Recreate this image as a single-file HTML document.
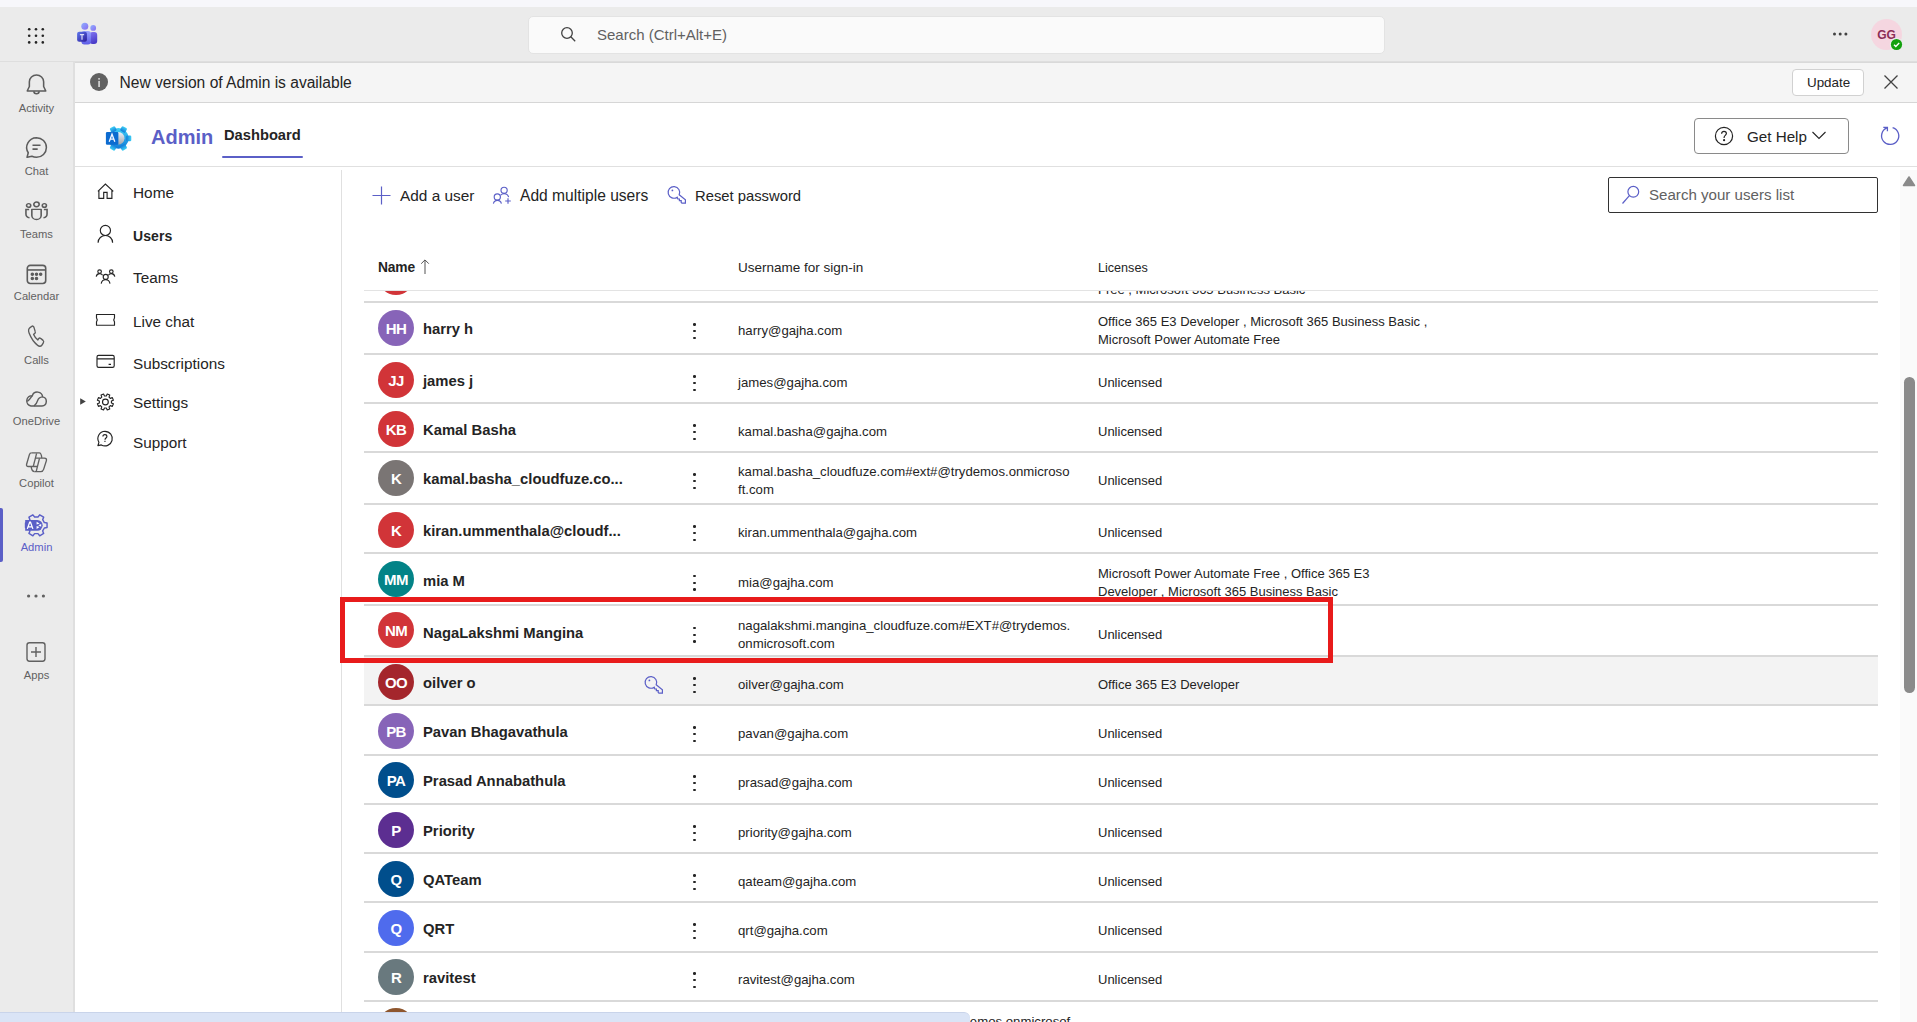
<!DOCTYPE html>
<html><head><meta charset="utf-8">
<style>
html,body{margin:0;padding:0}
body{width:1917px;height:1022px;overflow:hidden;position:relative;font-family:"Liberation Sans",sans-serif;color:#242424;background:#fff}
.a{position:absolute}
.t{position:absolute;white-space:nowrap}
.rl{position:absolute;left:364px;width:1514px;height:2px;background:#d9d9d9}
.av{position:absolute;left:378px;width:36px;height:36px;border-radius:50%;color:#fff;font-weight:700;font-size:15px;line-height:37px;text-align:center;letter-spacing:-0.6px}
.keb{position:absolute;left:693px;width:4px;height:16px}
.keb i{display:block;width:2.6px;height:2.6px;border-radius:50%;background:#242424;margin:0 0 4.2px 0}
.rail{position:absolute;left:0;width:74px;text-align:center;font-size:11px;color:#616161}
.rail svg{display:block;margin:0 auto}
.nav{position:absolute;left:133px;font-size:15px;color:#242424;white-space:nowrap}
.ni{position:absolute;left:95px}
</style></head><body>
<!-- top strip -->
<div class="a" style="left:0;top:0;width:1917px;height:7px;background:#f7f7fb"></div>
<!-- header -->
<div class="a" style="left:0;top:7px;width:1917px;height:54px;background:#ebebeb;border-bottom:1px solid #dedede"></div>
<!-- waffle -->
<svg class="a" style="left:26px;top:26px" width="20" height="20" viewBox="0 0 20 20" fill="#242424">
<circle cx="3.2" cy="3.2" r="1.3"/><circle cx="10" cy="3.2" r="1.3"/><circle cx="16.8" cy="3.2" r="1.3"/>
<circle cx="3.2" cy="9.8" r="1.3"/><circle cx="10" cy="9.8" r="1.3"/><circle cx="16.8" cy="9.8" r="1.3"/>
<circle cx="3.2" cy="16.4" r="1.3"/><circle cx="10" cy="16.4" r="1.3"/><circle cx="16.8" cy="16.4" r="1.3"/>
</svg>
<!-- teams logo -->
<svg class="a" style="left:72px;top:18px" width="30" height="30" viewBox="0 0 30 30">
<defs>
<linearGradient id="tgb" x1="0" y1="0" x2="0.3" y2="1"><stop offset="0" stop-color="#8377f2"/><stop offset="1" stop-color="#4a3cc8"/></linearGradient>
<linearGradient id="tgf" x1="0" y1="0" x2="0" y2="1"><stop offset="0" stop-color="#9aa4ff"/><stop offset="1" stop-color="#5b5ae6"/></linearGradient>
<linearGradient id="tgh" x1="0" y1="0" x2="1" y2="1"><stop offset="0" stop-color="#8fb0ff"/><stop offset="1" stop-color="#8a6cf0"/></linearGradient>
<linearGradient id="tgs" x1="0" y1="0" x2="1" y2="1"><stop offset="0" stop-color="#5f78ee"/><stop offset="1" stop-color="#2a1a98"/></linearGradient>
</defs>
<rect x="17.6" y="14" width="7.6" height="12" rx="3" fill="url(#tgb)"/>
<circle cx="21.2" cy="9.9" r="2.9" fill="url(#tgh)"/>
<circle cx="12.8" cy="8.2" r="3.5" fill="url(#tgh)"/>
<rect x="9.4" y="13" width="9.6" height="13.6" rx="3" fill="url(#tgf)"/>
<rect x="5.1" y="13.8" width="9.8" height="10" rx="2" fill="url(#tgs)"/>
<path d="M7.9 16h4.2v1.3h-1.5v4.5H9.4v-4.5H7.9z" fill="#dcdcf7"/>
</svg>
<!-- search -->
<div class="a" style="left:528px;top:16px;width:855px;height:36px;background:#fafafa;border:1px solid #e3e3e3;border-radius:5px"></div>
<svg class="a" style="left:559px;top:25px" width="18" height="18" viewBox="0 0 18 18" fill="none" stroke="#424242" stroke-width="1.3">
<circle cx="8" cy="8" r="5.3"/><path d="M11.8 11.8l4.4 4.4"/></svg>
<div class="t" style="left:597px;top:26px;font-size:15px;line-height:18px;color:#616161">Search (Ctrl+Alt+E)</div>
<!-- ellipsis -->
<svg class="a" style="left:1830px;top:30px" width="20" height="8" viewBox="0 0 20 8" fill="#424242">
<circle cx="4.5" cy="4" r="1.5"/><circle cx="10.2" cy="4" r="1.5"/><circle cx="15.9" cy="4" r="1.5"/></svg>
<!-- avatar -->
<div class="a" style="left:1871px;top:19px;width:31px;height:31px;border-radius:50%;background:#f5d6e0;color:#8b2e56;font-weight:700;font-size:12px;line-height:33px;text-align:center">GG</div>
<svg class="a" style="left:1889px;top:37px" width="15" height="15" viewBox="0 0 15 15">
<circle cx="7.5" cy="7.5" r="6.7" fill="#ebebeb"/><circle cx="7.5" cy="7.5" r="5.6" fill="#13a10e"/>
<path d="M5 7.7l1.8 1.7 3.4-3.4" stroke="#fff" stroke-width="1.4" fill="none"/></svg>

<!-- rail -->
<div class="a" style="left:0;top:62px;width:73px;height:960px;background:#ebebeb;border-right:2px solid #dfdfdf"></div>
<div class="a" style="left:0;top:508px;width:3px;height:54px;background:#5b5fc7;border-radius:0 2px 2px 0"></div>
<svg class="a" style="left:22.5px;top:70.5px" width="27" height="27" viewBox="0 0 22 22" fill="none" stroke="#5c5c5c" stroke-width="1.3"><g transform="translate(11 10) scale(0.97 0.92) translate(-11 -10)"><path d="M11 2.6a6 6 0 0 0-6 6v4.3L3.2 16.8h15.6L17 12.9V8.6a6 6 0 0 0-6-6z" stroke-linejoin="round"/><path d="M8.8 17a2.2 2.2 0 0 0 4.4 0"/></g></svg>
<div class="t" style="left:0px;top:100.72px;font-size:11.2px;line-height:14px;font-weight:400;color:#616161;letter-spacing:0px;width:73px;text-align:center;">Activity</div>
<svg class="a" style="left:22.5px;top:134.1px" width="27" height="27" viewBox="0 0 22 22" fill="none" stroke="#5c5c5c" stroke-width="1.3"><g transform="translate(11 11) scale(0.96 0.95) translate(-11 -11)"><path d="M11 2.6a8.4 8.4 0 0 1 0 16.8c-1.4 0-2.7-.3-3.9-.9L3 19.4l1-3.9A8.4 8.4 0 0 1 11 2.6z" stroke-linejoin="round"/><path d="M7.6 9h6.8M7.6 12.4h4.4"/></g></svg>
<div class="t" style="left:0px;top:164.12px;font-size:11.2px;line-height:14px;font-weight:400;color:#616161;letter-spacing:0px;width:73px;text-align:center;">Chat</div>
<svg class="a" style="left:22.5px;top:198.5px" width="27" height="27" viewBox="0 0 22 22" fill="none" stroke="#5c5c5c" stroke-width="1.3"><g transform="translate(11 10) scale(1 0.88) translate(-11 -10)"><circle cx="11" cy="3.6" r="2.2"/><circle cx="4.6" cy="4.6" r="1.7"/><circle cx="17.4" cy="4.6" r="1.7"/><path d="M7.2 8.2h7.6v5.6a3.8 3.8 0 0 1-7.6 0z" stroke-linejoin="round"/><path d="M5 8.4H2.4v4.2c0 1.7 1.2 3.2 2.9 3.4M17 8.4h2.6v4.2c0 1.7-1.2 3.2-2.9 3.4"/></g></svg>
<div class="t" style="left:0px;top:226.52px;font-size:11.2px;line-height:14px;font-weight:400;color:#616161;letter-spacing:0px;width:73px;text-align:center;">Teams</div>
<svg class="a" style="left:22.5px;top:261.3px" width="27" height="27" viewBox="0 0 22 22" fill="none" stroke="#5c5c5c" stroke-width="1.3"><rect x="3.5" y="3.6" width="15" height="14.7" rx="2.4"/><path d="M3.5 7.3h15"/><circle cx="7.6" cy="10.8" r=".8" fill="#5c5c5c"/><circle cx="11" cy="10.8" r=".8" fill="#5c5c5c"/><circle cx="14.4" cy="10.8" r=".8" fill="#5c5c5c"/><circle cx="7.6" cy="14.2" r=".8" fill="#5c5c5c"/><circle cx="11" cy="14.2" r=".8" fill="#5c5c5c"/></svg>
<div class="t" style="left:0px;top:289.12px;font-size:11.2px;line-height:14px;font-weight:400;color:#616161;letter-spacing:0px;width:73px;text-align:center;">Calendar</div>
<svg class="a" style="left:22.5px;top:323.2px" width="27" height="27" viewBox="0 0 22 22" fill="none" stroke="#5c5c5c" stroke-width="1.3"><g transform="translate(11 10.6) scale(0.8 0.96) translate(-11 -10.6)"><path d="M6.2 2.4L4.4 3.5C3 4.4 2.6 6.3 3.5 8.2c2 4.3 5 7.9 8.7 10.4 1.6 1.1 3.6.8 4.6-.6l1.2-1.7c.5-.7.3-1.6-.4-2.1l-2.4-1.6c-.7-.5-1.6-.3-2.1.3l-.8 1c-1.8-1.1-3.3-2.8-4.3-4.7l1-.6c.7-.4 1-1.3.6-2L8.3 3c-.4-.8-1.4-1-2.1-.6z" stroke-linejoin="round"/></g></svg>
<div class="t" style="left:0px;top:352.92px;font-size:11.2px;line-height:14px;font-weight:400;color:#616161;letter-spacing:0px;width:73px;text-align:center;">Calls</div>
<svg class="a" style="left:20px;top:385px" width="32" height="30" viewBox="20 385 32 30" fill="none" stroke="#5c5c5c" stroke-width="1.45"><path d="M31 406H42A4.6 4.6 0 0 0 42.6 396.9A5.3 5.3 0 0 0 32.3 395.7A5.2 5.2 0 0 0 31 406Z" stroke-linejoin="round"/><path d="M34 406Q36.6 404 37.6 400.6Q38.6 397.3 42.6 396.9M27.3 401.3Q29.5 400 32.3 395.7"/></svg>
<div class="t" style="left:0px;top:413.62px;font-size:11.2px;line-height:14px;font-weight:400;color:#616161;letter-spacing:0px;width:73px;text-align:center;">OneDrive</div>
<svg class="a" style="left:20px;top:445px" width="32" height="32" viewBox="0 0 32 32" fill="none" stroke="#616161" stroke-width="1.35"><path d="M11.6 7.8H19.2Q21.3 7.8 21.8 12.9"/><path d="M11.6 7.8Q9.9 7.8 9.4 9.6L6.6 19.2Q6.1 21.5 8.3 21.5H17.2"/><path d="M16.6 8.4L13.3 21.3"/><path d="M19.5 13.3L16.2 26.3"/><path d="M15.9 13.1H24.4Q26.9 13.1 26.4 15.6L23.6 24.4Q22.9 26.6 20.8 26.6H14.6"/><path d="M11.2 21.6Q11.7 26.6 14.6 26.6"/></svg>
<div class="t" style="left:0px;top:476.32px;font-size:11.2px;line-height:14px;font-weight:400;color:#616161;letter-spacing:0px;width:73px;text-align:center;">Copilot</div>
<svg class="a" style="left:20px;top:508px" width="32" height="32" viewBox="20 508 32 32"><path d="M44.36 522.59 L47.06 523.01 L47.06 527.59 L44.36 528.01 L42.68 530.92 L43.66 533.47 L39.70 535.76 L37.98 533.63 L34.62 533.63 L32.90 535.76 L28.94 533.47 L29.92 530.92 L28.24 528.01 L25.54 527.59 L25.54 523.01 L28.24 522.59 L29.92 519.68 L28.94 517.13 L32.90 514.84 L34.62 516.97 L37.98 516.97 L39.70 514.84 L43.66 517.13 L42.68 519.68Z" fill="none" stroke="#5b5fc7" stroke-width="1.45" stroke-linejoin="round"/><path d="M25.2 520H37.3A5.35 5.35 0 0 1 37.3 530.7H25.2Z" fill="#5b5fc7"/><path d="M27.3 528.9L29.7 522.2H30.5L32.9 528.9M28.3 526.9H31.9" stroke="#fff" stroke-width="1.25" fill="none"/><path d="M36.6 521.7L39.6 523.6L36.6 524.6Z M38.2 525.35L41.2 523.9L41.2 526.8Z M36.6 526.1L39.6 527.1L36.6 529Z" fill="#fff"/></svg>
<div class="t" style="left:0px;top:540.12px;font-size:11.2px;line-height:14px;font-weight:400;color:#5b5fc7;letter-spacing:0px;width:73px;text-align:center;">Admin</div>
<svg class="a" style="left:26px;top:592px" width="20" height="8" viewBox="0 0 20 8" fill="#616161"><circle cx="2.6" cy="4" r="1.6"/><circle cx="10" cy="4" r="1.6"/><circle cx="17.4" cy="4" r="1.6"/></svg>
<svg class="a" style="left:25px;top:640.5px" width="22" height="22" viewBox="0 0 22 22" fill="none" stroke="#616161" stroke-width="1.4"><rect x="2" y="1.8" width="18" height="18.4" rx="2.4"/><path d="M11 6v10M6 11h10"/></svg>
<div class="t" style="left:0px;top:667.72px;font-size:11.2px;line-height:14px;font-weight:400;color:#616161;letter-spacing:0px;width:73px;text-align:center;">Apps</div>

<!-- banner -->
<div class="a" style="left:75px;top:62px;width:1842px;height:39px;background:#f5f5f5;border-top:1px solid #d9d9d9;border-bottom:1px solid #d6d6d6"></div>
<svg class="a" style="left:89px;top:72px" width="20" height="20" viewBox="0 0 20 20">
<circle cx="10" cy="10" r="9" fill="#616161"/><rect x="9.35" y="8.9" width="1.45" height="6.1" fill="#e6e6e6"/><circle cx="10.05" cy="6.8" r="0.85" fill="#eeeeee"/></svg>
<div class="t" style="left:119.5px;top:74px;font-size:15.6px;line-height:18px">New version of Admin is available</div>
<div class="a" style="left:1792px;top:69px;width:70px;height:25px;background:#fff;border:1px solid #d1d1d1;border-radius:4px"></div>
<div class="t" style="left:1807px;top:75px;font-size:13.4px;line-height:16px">Update</div>
<svg class="a" style="left:1883px;top:74px" width="16" height="16" viewBox="0 0 16 16" stroke="#424242" stroke-width="1.3"><path d="M1.5 1.5l13 13M14.5 1.5l-13 13"/></svg>

<!-- app header -->
<div class="a" style="left:75px;top:103px;width:1842px;height:63px;background:#fff;border-bottom:1px solid #e0e0e0"></div>
<svg class="a" style="left:100px;top:118px" width="40" height="40" viewBox="0 0 40 40">
<defs>
<linearGradient id="ag" x1="0" y1="0" x2="0" y2="1"><stop offset="0" stop-color="#3fd0f6"/><stop offset="1" stop-color="#127ad8"/></linearGradient>
<linearGradient id="agr" x1="0" y1="0" x2="0" y2="1"><stop offset="0" stop-color="#eef2fa"/><stop offset="1" stop-color="#a0a5ae"/></linearGradient>
</defs>
<g transform="translate(18.4 20.4)" fill="url(#ag)"><circle r="10.3"/><rect x="-2.9" y="-12.9" width="5.8" height="5" rx="1.2" transform="rotate(-30)"/><rect x="-2.9" y="-12.9" width="5.8" height="5" rx="1.2" transform="rotate(30)"/><rect x="-2.9" y="-12.9" width="5.8" height="5" rx="1.2" transform="rotate(90)"/><rect x="-2.9" y="-12.9" width="5.8" height="5" rx="1.2" transform="rotate(150)"/><rect x="-2.9" y="-12.9" width="5.8" height="5" rx="1.2" transform="rotate(210)"/></g>
<path d="M18.2 14A6.3 6.3 0 0 1 18.2 26.6Z" fill="url(#agr)"/>
<rect x="5.9" y="14.1" width="12.4" height="12.7" rx="1.3" fill="#0c6bd0"/>
<path d="M9.2 23.7L12 16.2L14.8 23.7M10.2 21.2H13.8" stroke="#f4f6ff" stroke-width="1.3" fill="none"/>
</svg>
<div class="t" style="left:151px;top:125px;font-size:20px;line-height:24px;font-weight:700;color:#5b5fc7">Admin</div>
<div class="t" style="left:224px;top:126px;font-size:14.7px;line-height:18px;font-weight:700">Dashboard</div>
<div class="a" style="left:222px;top:156px;width:81px;height:2px;background:#5b5fc7;border-radius:1px"></div>
<div class="a" style="left:1694px;top:118px;width:153px;height:34px;background:#fff;border:1px solid #8a8a8a;border-radius:4px"></div>
<svg class="a" style="left:1714px;top:126px" width="20" height="20" viewBox="0 0 20 20" fill="none" stroke="#242424" stroke-width="1.2">
<circle cx="10" cy="10" r="8.6"/><path d="M7.6 7.8c0-1.5 1.1-2.5 2.4-2.5s2.4 0.9 2.4 2.3c0 1.7-2.3 1.9-2.3 3.8v0.5"/><circle cx="10.1" cy="14.2" r="0.5" fill="#242424"/></svg>
<div class="t" style="left:1747px;top:128px;font-size:15.2px;line-height:18px">Get Help</div>
<svg class="a" style="left:1811px;top:130px" width="16" height="10" viewBox="0 0 16 10" fill="none" stroke="#242424" stroke-width="1.1"><path d="M1.5 2l6.5 6.5L14.5 2"/></svg>
<svg class="a" style="left:1876px;top:122px" width="28" height="28" viewBox="1876 122 28 28" fill="none" stroke="#5b5fc7" stroke-width="1.3"><path d="M1892.6 127.6A8.6 8.6 0 1 1 1886.9 127.9"/><path d="M1883.3 127.4H1887.4V131.3"/></svg>

<!-- nav -->
<div class="a" style="left:341px;top:170px;width:1px;height:852px;background:#e0e0e0"></div>
<svg class="a" style="left:90px;top:178px" width="30" height="30" viewBox="0 0 30 30" fill="none" stroke="#242424" stroke-width="1.15"><path d="M7.9 13.4L15.4 6L23.3 13.4M8.9 12.5V20.4H13.7V14.4H17.1V20.4H21.9V12.5" stroke-linejoin="miter"/></svg>
<div class="t" style="left:133px;top:183.16px;font-size:15.4px;line-height:19px;font-weight:400;color:#242424;letter-spacing:0px;">Home</div>
<svg class="a" style="left:90px;top:220px" width="30" height="30" viewBox="0 0 30 30" fill="none" stroke="#242424" stroke-width="1.15"><circle cx="15.4" cy="10.4" r="5.1"/><path d="M8.1 22.7C8.1 18.5 11.5 15.5 15.4 15.5S22.6 18.5 22.6 22.7"/></svg>
<div class="t" style="left:133px;top:227.15px;font-size:14px;line-height:18px;font-weight:700;color:#242424;letter-spacing:0.1px;">Users</div>
<svg class="a" style="left:90px;top:260px" width="30" height="30" viewBox="0 0 30 30" fill="none" stroke="#242424" stroke-width="1.15"><circle cx="9.6" cy="11.6" r="1.8"/><circle cx="21.3" cy="11.6" r="1.8"/><circle cx="15.7" cy="16.9" r="2.5"/><path d="M11.2 23.6Q11.8 19.7 15.6 19.7Q19.4 19.7 20 23.6M6.2 16.6Q6.8 13.6 9.6 13.6Q11.6 13.6 12.6 15.2M24.8 16.6Q24.2 13.6 21.4 13.6Q19.4 13.6 18.4 15.2"/></svg>
<div class="t" style="left:133px;top:268.00px;font-size:15.3px;line-height:19px;font-weight:400;color:#242424;letter-spacing:0px;">Teams</div>
<svg class="a" style="left:90px;top:305px" width="30" height="30" viewBox="0 0 30 30" fill="none" stroke="#242424" stroke-width="1.15"><path d="M6.5 9.5H24.5V12.8Q23 14.8 24.5 16.8V20.2H6.5V16.8Q8 14.8 6.5 12.8Z" stroke-linejoin="round"/></svg>
<div class="t" style="left:133px;top:311.60px;font-size:15.3px;line-height:19px;font-weight:400;color:#242424;letter-spacing:0px;">Live chat</div>
<svg class="a" style="left:90px;top:350px" width="30" height="30" viewBox="0 0 30 30" fill="none" stroke="#242424" stroke-width="1.15"><rect x="7" y="5.4" width="17.2" height="11.9" rx="1.6"/><path d="M7 8.9H24.2M18.6 14.4H21"/></svg>
<div class="t" style="left:133px;top:354.20px;font-size:15.3px;line-height:19px;font-weight:400;color:#242424;letter-spacing:0px;">Subscriptions</div>
<svg class="a" style="left:90px;top:390px" width="30" height="30" viewBox="0 0 30 30" fill="none" stroke="#242424" stroke-width="1.15"><path d="M21.43 12.91 L23.39 13.85 L22.36 16.34 L20.31 15.62 L19.02 16.91 L19.74 18.96 L17.25 19.99 L16.31 18.03 L14.49 18.03 L13.55 19.99 L11.06 18.96 L11.78 16.91 L10.49 15.62 L8.44 16.34 L7.41 13.85 L9.37 12.91 L9.37 11.09 L7.41 10.15 L8.44 7.66 L10.49 8.38 L11.78 7.09 L11.06 5.04 L13.55 4.01 L14.49 5.97 L16.31 5.97 L17.25 4.01 L19.74 5.04 L19.02 7.09 L20.31 8.38 L22.36 7.66 L23.39 10.15 L21.43 11.09Z" stroke-linejoin="round"/><circle cx="15.4" cy="12" r="2.9"/></svg>
<div class="t" style="left:133px;top:392.60px;font-size:15.3px;line-height:19px;font-weight:400;color:#242424;letter-spacing:0px;">Settings</div>
<svg class="a" style="left:90px;top:428px" width="30" height="30" viewBox="0 0 30 30" fill="none" stroke="#242424" stroke-width="1.15"><path d="M15 3.3A7.3 7.3 0 1 1 11.3 16.9L7.9 17.6L8.9 14.3A7.3 7.3 0 0 1 15 3.3Z" stroke-linejoin="round"/><path d="M12.9 8.6C12.9 7.4 13.8 6.6 14.9 6.6S16.9 7.4 16.9 8.5C16.9 10 15 10.1 15 11.7"/><path d="M14.4 13.4H15.5"/></svg>
<div class="t" style="left:133px;top:433.20px;font-size:15.3px;line-height:19px;font-weight:400;color:#242424;letter-spacing:0px;">Support</div>
<svg class="a" style="left:79px;top:397px" width="8" height="9" viewBox="0 0 8 9"><path d="M1.2 1.2L6.8 4.5L1.2 7.8z" fill="#424242"/></svg>

<!-- toolbar -->
<svg class="a" style="left:371px;top:185px" width="21" height="21" viewBox="0 0 21 21" stroke="#5b5fc7" stroke-width="1.2"><path d="M10.5 1.5v18M1.5 10.5h18"/></svg>
<div class="t" style="left:400px;top:186.16px;font-size:15.4px;line-height:19px;font-weight:400;color:#242424;letter-spacing:0px;">Add a user</div>
<svg class="a" style="left:491px;top:185px" width="22" height="21" viewBox="0 0 22 21" fill="none" stroke="#5b5fc7" stroke-width="1.15"><circle cx="13.1" cy="5.3" r="3.1"/><path d="M9.6 10.1c.9-.9 2.1-1.4 3.5-1.4 2.4 0 4.1 1.4 4.5 3.4"/><circle cx="6.3" cy="11.9" r="3.1"/><path d="M2.4 18.6c.5-2.2 1.9-3.3 4-3.3s3.5 1.1 4 3.3"/><path d="M17 13.2v5.6M14.2 16h5.6"/></svg>
<div class="t" style="left:520px;top:185.59px;font-size:15.6px;line-height:20px;font-weight:400;color:#242424;letter-spacing:0px;">Add multiple users</div>
<svg class="a" style="left:662px;top:180px" width="30" height="30" viewBox="0 0 30 30" fill="none" stroke="#5b5fc7" stroke-width="1.2"><path d="M17.2 14.8A5.8 5.8 0 1 0 15.2 17.2L15.8 19H17.4V20.6H19.2V22.4L20 23.2H23.4V19.8Z" stroke-linejoin="miter"/><circle cx="10.4" cy="10.4" r="0.9" fill="#5b5fc7" stroke="none"/></svg>
<div class="t" style="left:695px;top:186.87px;font-size:14.8px;line-height:18px;font-weight:400;color:#242424;letter-spacing:0px;">Reset password</div>

<!-- search users -->
<div class="a" style="left:1608px;top:177px;width:268px;height:34px;background:#fff;border:1px solid #323232;border-radius:2px"></div>
<svg class="a" style="left:1621px;top:185px" width="20" height="20" viewBox="0 0 20 20" fill="none" stroke="#5b5fc7" stroke-width="1.2">
<circle cx="12.3" cy="6.8" r="5.4"/><path d="M8.4 10.6L1.5 18.5"/></svg>
<div class="t" style="left:1649px;top:186px;font-size:15.1px;line-height:18px;color:#616161">Search your users list</div>

<!-- scrollbar -->
<div class="a" style="left:1900px;top:170px;width:17px;height:852px;background:#fafafa"></div>
<svg class="a" style="left:1902px;top:175px" width="14" height="12" viewBox="0 0 14 12"><path d="M7 2L12.5 10.5H1.5Z" fill="#8a8a8a" stroke="#8a8a8a" stroke-width="1.5" stroke-linejoin="round"/></svg>
<div class="a" style="left:1904px;top:377px;width:10.8px;height:316px;background:#8a8a8a;border-radius:5.4px"></div>

<!-- table header -->
<div class="t" style="left:378px;top:259.5px;font-size:13.8px;line-height:16px;font-weight:700;letter-spacing:-0.15px">Name</div>
<svg class="a" style="left:419px;top:258px" width="12" height="17" viewBox="0 0 12 17" fill="none" stroke="#4a4a4a" stroke-width="0.95"><path d="M6 16V2.2M2.2 5.7L6 1.9L9.8 5.7"/></svg>
<div class="t" style="left:738px;top:260px;font-size:13.5px;line-height:16px">Username for sign-in</div>
<div class="t" style="left:1098px;top:260px;font-size:12.6px;line-height:16px">Licenses</div>

<!-- table body -->
<div class="a" style="left:342px;top:291px;width:1558px;height:731px;overflow:hidden">
<div class="a" style="left:-342px;top:-291px;width:1917px;height:1322px">
<div style="position:absolute;left:364px;top:657px;width:1514px;height:47px;background:#f3f3f3"></div>
<div class="rl" style="top:301px"></div>
<div class="rl" style="top:353px"></div>
<div class="rl" style="top:402px"></div>
<div class="rl" style="top:451px"></div>
<div class="rl" style="top:503px"></div>
<div class="rl" style="top:552px"></div>
<div class="rl" style="top:604px"></div>
<div class="rl" style="top:655px"></div>
<div class="rl" style="top:704px"></div>
<div class="rl" style="top:754px"></div>
<div class="rl" style="top:803px"></div>
<div class="rl" style="top:852px"></div>
<div class="rl" style="top:901px"></div>
<div class="rl" style="top:951px"></div>
<div class="rl" style="top:1000px"></div>
<div class="av" style="top:259px;background:#d13438"></div>
<div class="t" style="left:738px;top:271.98px;font-size:13.2px;line-height:17.5px;font-weight:400;color:#242424;letter-spacing:0px"></div>
<div class="t" style="left:1098px;top:262.60px;font-size:13px;line-height:18px;font-weight:400;color:#242424;letter-spacing:0px">Office 365 E3 Developer , Microsoft Power Automate</div><div class="t" style="left:1098px;top:280.60px;font-size:13px;line-height:18px;font-weight:400;color:#242424;letter-spacing:0px">Free , Microsoft 365 Business Basic</div>
<div class="av" style="top:310px;background:#8764b8">HH</div>
<div class="t" style="left:423px;top:320.47px;font-size:14.8px;line-height:18px;font-weight:700;color:#242424;letter-spacing:0px">harry h</div>
<div class="keb" style="top:323px"><i></i><i></i><i></i></div>
<div class="t" style="left:738px;top:322.18px;font-size:13.2px;line-height:17.5px;font-weight:400;color:#242424;letter-spacing:0px">harry@gajha.com</div>
<div class="t" style="left:1098px;top:312.80px;font-size:13px;line-height:18px;font-weight:400;color:#242424;letter-spacing:0px">Office 365 E3 Developer , Microsoft 365 Business Basic ,</div><div class="t" style="left:1098px;top:330.80px;font-size:13px;line-height:18px;font-weight:400;color:#242424;letter-spacing:0px">Microsoft Power Automate Free</div>
<div class="av" style="top:362px;background:#d13438">JJ</div>
<div class="t" style="left:423px;top:372.47px;font-size:14.8px;line-height:18px;font-weight:700;color:#242424;letter-spacing:0px">james j</div>
<div class="keb" style="top:375px"><i></i><i></i><i></i></div>
<div class="t" style="left:738px;top:374.18px;font-size:13.2px;line-height:17.5px;font-weight:400;color:#242424;letter-spacing:0px">james@gajha.com</div>
<div class="t" style="left:1098px;top:373.80px;font-size:13px;line-height:18px;font-weight:400;color:#242424;letter-spacing:0px">Unlicensed</div>
<div class="av" style="top:411px;background:#d13438">KB</div>
<div class="t" style="left:423px;top:421.47px;font-size:14.8px;line-height:18px;font-weight:700;color:#242424;letter-spacing:0px">Kamal Basha</div>
<div class="keb" style="top:424px"><i></i><i></i><i></i></div>
<div class="t" style="left:738px;top:423.18px;font-size:13.2px;line-height:17.5px;font-weight:400;color:#242424;letter-spacing:0px">kamal.basha@gajha.com</div>
<div class="t" style="left:1098px;top:422.80px;font-size:13px;line-height:18px;font-weight:400;color:#242424;letter-spacing:0px">Unlicensed</div>
<div class="av" style="top:460px;background:#7a7574">K</div>
<div class="t" style="left:423px;top:470.47px;font-size:14.8px;line-height:18px;font-weight:700;color:#242424;letter-spacing:0px">kamal.basha_cloudfuze.co...</div>
<div class="keb" style="top:473px"><i></i><i></i><i></i></div>
<div class="t" style="left:738px;top:463.43px;font-size:13.2px;line-height:17.5px;font-weight:400;color:#242424;letter-spacing:0px">kamal.basha_cloudfuze.com#ext#@trydemos.onmicroso</div><div class="t" style="left:738px;top:480.93px;font-size:13.2px;line-height:17.5px;font-weight:400;color:#242424;letter-spacing:0px">ft.com</div>
<div class="t" style="left:1098px;top:471.80px;font-size:13px;line-height:18px;font-weight:400;color:#242424;letter-spacing:0px">Unlicensed</div>
<div class="av" style="top:512px;background:#d13438">K</div>
<div class="t" style="left:423px;top:522.47px;font-size:14.8px;line-height:18px;font-weight:700;color:#242424;letter-spacing:0px">kiran.ummenthala@cloudf...</div>
<div class="keb" style="top:525px"><i></i><i></i><i></i></div>
<div class="t" style="left:738px;top:524.18px;font-size:13.2px;line-height:17.5px;font-weight:400;color:#242424;letter-spacing:0px">kiran.ummenthala@gajha.com</div>
<div class="t" style="left:1098px;top:523.80px;font-size:13px;line-height:18px;font-weight:400;color:#242424;letter-spacing:0px">Unlicensed</div>
<div class="av" style="top:561px;background:#038387">MM</div>
<div class="t" style="left:423px;top:572.27px;font-size:14.8px;line-height:18px;font-weight:700;color:#242424;letter-spacing:0px">mia M</div>
<div class="keb" style="top:574.8px"><i></i><i></i><i></i></div>
<div class="t" style="left:738px;top:573.98px;font-size:13.2px;line-height:17.5px;font-weight:400;color:#242424;letter-spacing:0px">mia@gajha.com</div>
<div class="t" style="left:1098px;top:564.60px;font-size:13px;line-height:18px;font-weight:400;color:#242424;letter-spacing:0px">Microsoft Power Automate Free , Office 365 E3</div><div class="t" style="left:1098px;top:582.60px;font-size:13px;line-height:18px;font-weight:400;color:#242424;letter-spacing:0px">Developer , Microsoft 365 Business Basic</div>
<div class="av" style="top:612px;background:#d13438">NM</div>
<div class="t" style="left:423px;top:624.27px;font-size:14.8px;line-height:18px;font-weight:700;color:#242424;letter-spacing:0px">NagaLakshmi Mangina</div>
<div class="keb" style="top:626.8px"><i></i><i></i><i></i></div>
<div class="t" style="left:738px;top:617.23px;font-size:13.2px;line-height:17.5px;font-weight:400;color:#242424;letter-spacing:0px">nagalakshmi.mangina_cloudfuze.com#EXT#@trydemos.</div><div class="t" style="left:738px;top:634.73px;font-size:13.2px;line-height:17.5px;font-weight:400;color:#242424;letter-spacing:0px">onmicrosoft.com</div>
<div class="t" style="left:1098px;top:625.60px;font-size:13px;line-height:18px;font-weight:400;color:#242424;letter-spacing:0px">Unlicensed</div>
<div class="av" style="top:664px;background:#a4262c">OO</div>
<div class="t" style="left:423px;top:674.47px;font-size:14.8px;line-height:18px;font-weight:700;color:#242424;letter-spacing:0px">oilver o</div>
<div class="keb" style="top:677px"><i></i><i></i><i></i></div>
<div class="t" style="left:738px;top:676.18px;font-size:13.2px;line-height:17.5px;font-weight:400;color:#242424;letter-spacing:0px">oilver@gajha.com</div>
<div class="t" style="left:1098px;top:675.80px;font-size:13px;line-height:18px;font-weight:400;color:#242424;letter-spacing:0px">Office 365 E3 Developer</div>
<div class="av" style="top:713px;background:#8764b8">PB</div>
<div class="t" style="left:423px;top:723.47px;font-size:14.8px;line-height:18px;font-weight:700;color:#242424;letter-spacing:0px">Pavan Bhagavathula</div>
<div class="keb" style="top:726px"><i></i><i></i><i></i></div>
<div class="t" style="left:738px;top:725.18px;font-size:13.2px;line-height:17.5px;font-weight:400;color:#242424;letter-spacing:0px">pavan@gajha.com</div>
<div class="t" style="left:1098px;top:724.80px;font-size:13px;line-height:18px;font-weight:400;color:#242424;letter-spacing:0px">Unlicensed</div>
<div class="av" style="top:762px;background:#004e8c">PA</div>
<div class="t" style="left:423px;top:772.47px;font-size:14.8px;line-height:18px;font-weight:700;color:#242424;letter-spacing:0px">Prasad Annabathula</div>
<div class="keb" style="top:775px"><i></i><i></i><i></i></div>
<div class="t" style="left:738px;top:774.18px;font-size:13.2px;line-height:17.5px;font-weight:400;color:#242424;letter-spacing:0px">prasad@gajha.com</div>
<div class="t" style="left:1098px;top:773.80px;font-size:13px;line-height:18px;font-weight:400;color:#242424;letter-spacing:0px">Unlicensed</div>
<div class="av" style="top:812px;background:#5c2e91">P</div>
<div class="t" style="left:423px;top:822.47px;font-size:14.8px;line-height:18px;font-weight:700;color:#242424;letter-spacing:0px">Priority</div>
<div class="keb" style="top:825px"><i></i><i></i><i></i></div>
<div class="t" style="left:738px;top:824.18px;font-size:13.2px;line-height:17.5px;font-weight:400;color:#242424;letter-spacing:0px">priority@gajha.com</div>
<div class="t" style="left:1098px;top:823.80px;font-size:13px;line-height:18px;font-weight:400;color:#242424;letter-spacing:0px">Unlicensed</div>
<div class="av" style="top:861px;background:#004e8c">Q</div>
<div class="t" style="left:423px;top:871.47px;font-size:14.8px;line-height:18px;font-weight:700;color:#242424;letter-spacing:0px">QATeam</div>
<div class="keb" style="top:874px"><i></i><i></i><i></i></div>
<div class="t" style="left:738px;top:873.18px;font-size:13.2px;line-height:17.5px;font-weight:400;color:#242424;letter-spacing:0px">qateam@gajha.com</div>
<div class="t" style="left:1098px;top:872.80px;font-size:13px;line-height:18px;font-weight:400;color:#242424;letter-spacing:0px">Unlicensed</div>
<div class="av" style="top:910px;background:#4f6bed">Q</div>
<div class="t" style="left:423px;top:920.47px;font-size:14.8px;line-height:18px;font-weight:700;color:#242424;letter-spacing:0px">QRT</div>
<div class="keb" style="top:923px"><i></i><i></i><i></i></div>
<div class="t" style="left:738px;top:922.18px;font-size:13.2px;line-height:17.5px;font-weight:400;color:#242424;letter-spacing:0px">qrt@gajha.com</div>
<div class="t" style="left:1098px;top:921.80px;font-size:13px;line-height:18px;font-weight:400;color:#242424;letter-spacing:0px">Unlicensed</div>
<div class="av" style="top:959px;background:#69797e">R</div>
<div class="t" style="left:423px;top:969.47px;font-size:14.8px;line-height:18px;font-weight:700;color:#242424;letter-spacing:0px">ravitest</div>
<div class="keb" style="top:972px"><i></i><i></i><i></i></div>
<div class="t" style="left:738px;top:971.18px;font-size:13.2px;line-height:17.5px;font-weight:400;color:#242424;letter-spacing:0px">ravitest@gajha.com</div>
<div class="t" style="left:1098px;top:970.80px;font-size:13px;line-height:18px;font-weight:400;color:#242424;letter-spacing:0px">Unlicensed</div>
<div class="av" style="top:1008px;background:#8e562e"></div>
<div class="t" style="left:738px;top:1012.63px;font-size:13.2px;line-height:17.5px;font-weight:400;color:#242424;letter-spacing:0px">ravi.kumar.n_cloudfuze.com#ext#@trydemos.onmicrosof</div><div class="t" style="left:738px;top:1030.13px;font-size:13.2px;line-height:17.5px;font-weight:400;color:#242424;letter-spacing:0px">t.com</div>
<div class="t" style="left:1098px;top:1021.00px;font-size:13px;line-height:18px;font-weight:400;color:#242424;letter-spacing:0px">Unlicensed</div>
</div>
</div>
<div class="a" style="left:364px;top:290px;width:1514px;height:1px;background:#e3e3e3"></div>

<svg class="a" style="left:639.3px;top:669.7px" width="30" height="30" viewBox="0 0 30 30" fill="none" stroke="#5b5fc7" stroke-width="1.2"><path d="M17.2 14.8A5.8 5.8 0 1 0 15.2 17.2L15.8 19H17.4V20.6H19.2V22.4L20 23.2H23.4V19.8Z" stroke-linejoin="miter"/><circle cx="10.4" cy="10.4" r="0.9" fill="#5b5fc7" stroke="none"/></svg>
<!-- red box -->
<div class="a" style="left:340px;top:597px;width:983px;height:56px;border:5px solid #e81b1b"></div>

<!-- bottom status overlay -->
<div class="a" style="left:0;top:1012px;width:970px;height:10px;background:#dae4f6;border-top:1px solid #c9d4ea;border-radius:0 6px 0 0;overflow:hidden">
<div class="t" style="left:8px;top:5.5px;font-size:13px;line-height:16px;color:#242424">teams.microsoft.com/v2/?clientType=pwa#/tenant/apps/admin/users/nagalakshmi.mangina_cloudfuze.com#EXT#@trydemos.onmicrosoft.com</div>
</div>
</body></html>
